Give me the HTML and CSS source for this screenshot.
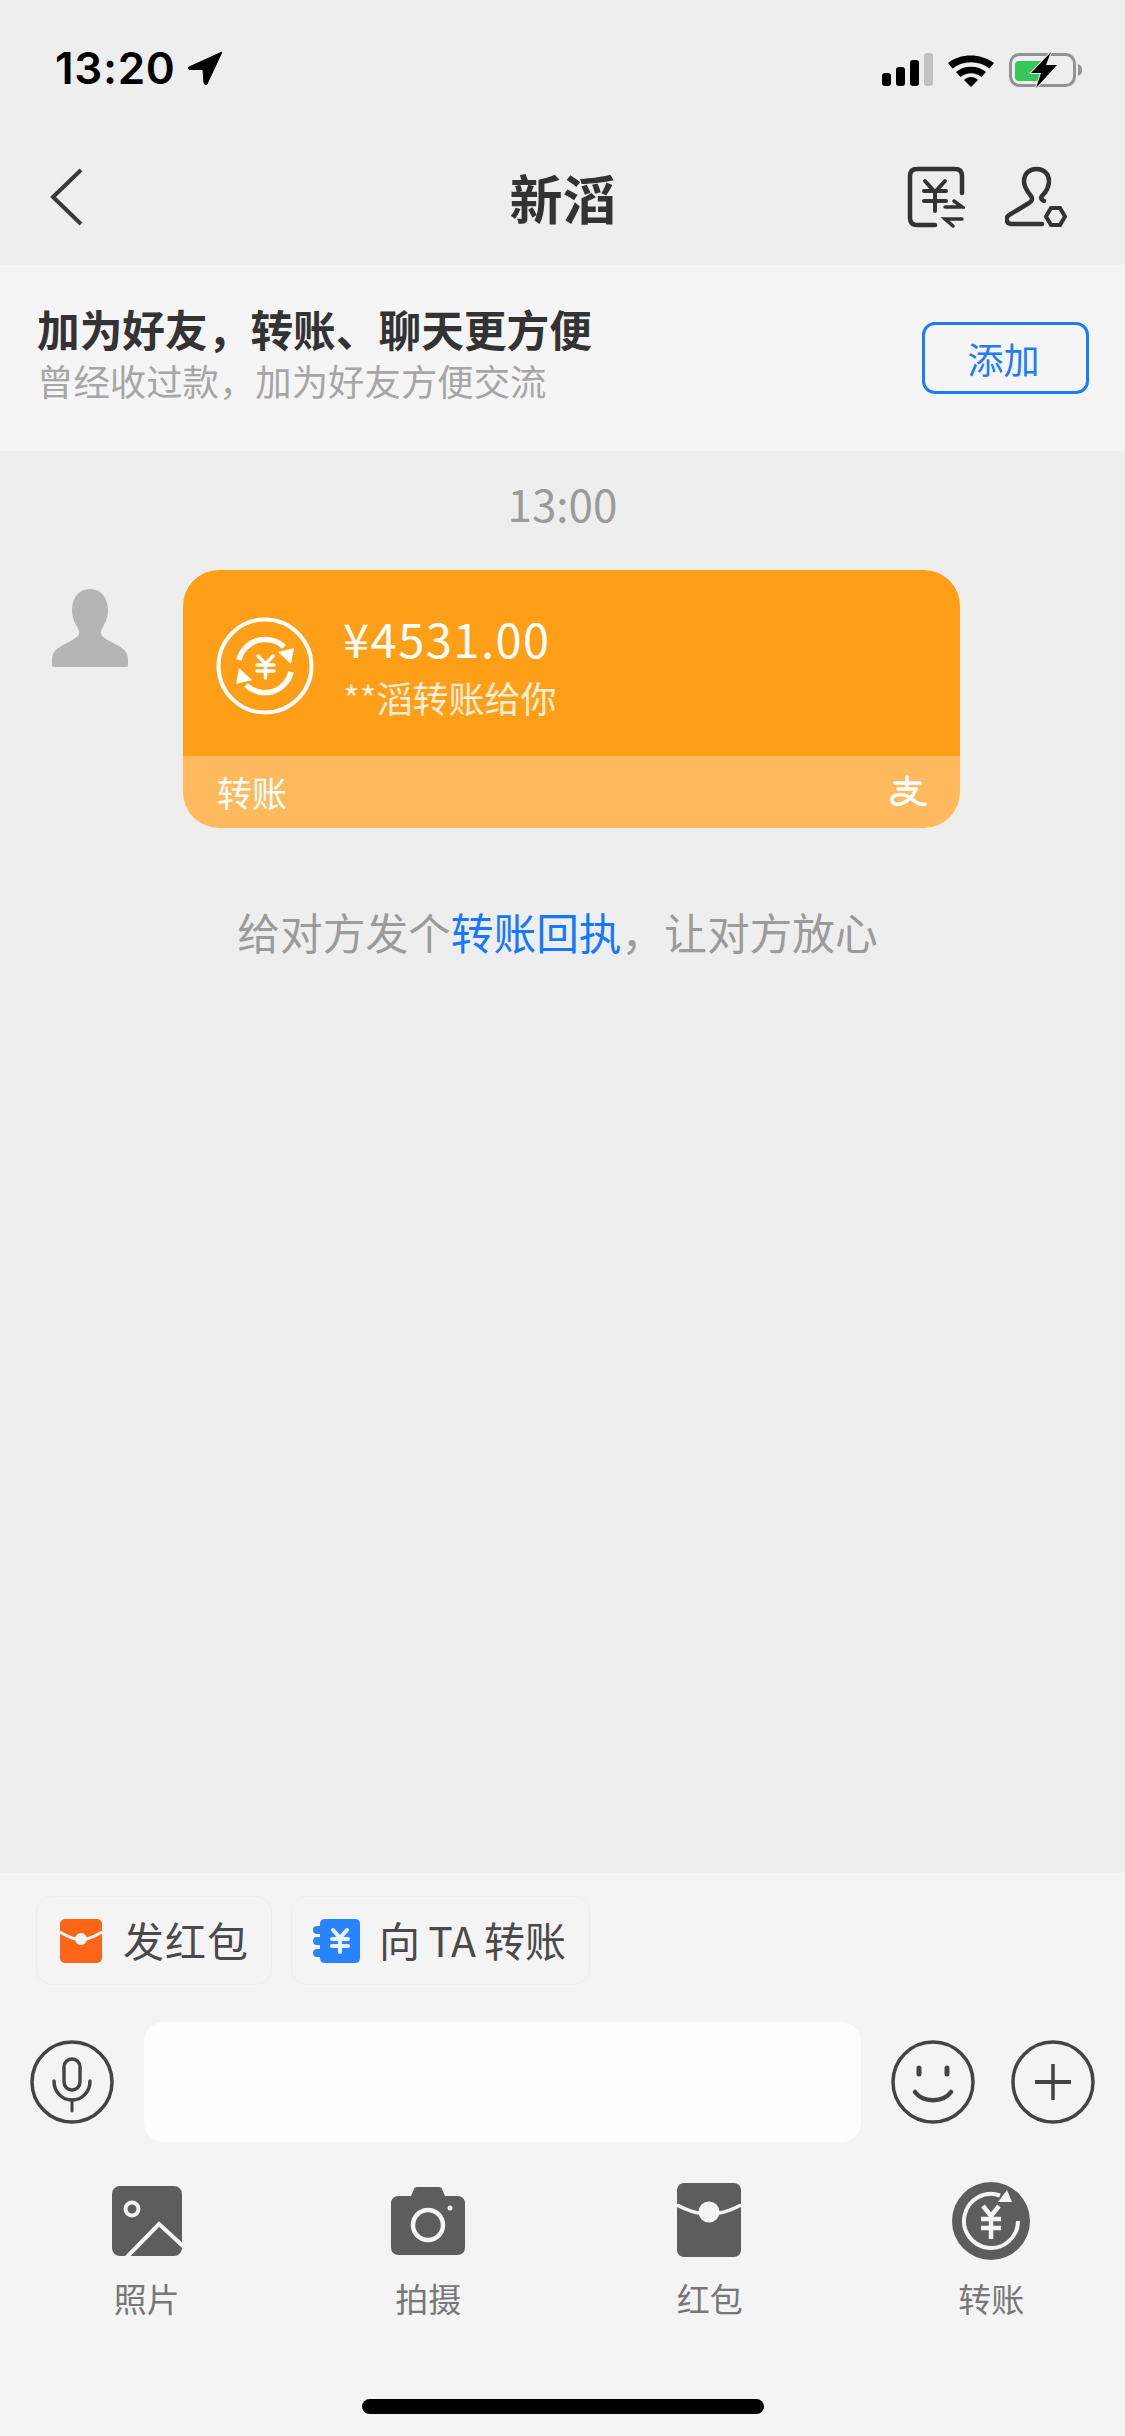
FILE: index.html
```html
<!DOCTYPE html>
<html lang="zh-CN">
<head>
<meta charset="utf-8">
<title>新滔</title>
<link rel="stylesheet" href="styles.css">
</head>
<body>
<div class="app">
  <header class="status">
    <div class="status-left">
      <span class="clock">13:20</span>
      <svg class="loc" width="36" height="35" viewBox="0 0 36 35"><path d="M35 1 L2 16 Q0 18 3 18.500 L16 18.500 L17 32 Q18 35 20 33 Z" fill="#000" stroke="#000" stroke-width="1" stroke-linejoin="round"/></svg>
    </div>
    <svg class="status-right" width="202" height="36" viewBox="0 0 202 36">
      <rect x="1" y="21" width="9" height="13" rx="3" fill="#000"/>
      <rect x="15" y="15" width="9" height="19" rx="3" fill="#000"/>
      <rect x="29" y="8" width="9" height="26" rx="3" fill="#000"/>
      <rect x="43" y="1" width="9" height="33" rx="3" fill="#c1c1c1"/>
      <path d="M67 11 C79 1 100 1 113 11 L108.500 16.500 C98 8 82 8 71.500 16.500 Z" fill="#000"/>
      <path d="M75 20 C83 13 97 13 105 20 L100.500 25 C94 20 86 20 79.500 25 Z" fill="#000"/>
      <path d="M83 28 C87 24 93 24 97 28 L90 35 Z" fill="#000"/>
      <rect x="129.500" y="2.500" width="64" height="31" rx="9" fill="none" stroke="#939393" stroke-width="3"/>
      <path d="M197 12 C200 13 201 15 201 18 C201 21 200 23 197 24 Z" fill="#939393"/>
      <path d="M138 9 Q134 9 134 13 V25 Q134 29 138 29 H161 V9 Z" fill="#34c759"/>
      <path d="M170 0 L150 21 H160 L155 36 L176 13 H165 Z" fill="#000" stroke="#eee" stroke-width="2" paint-order="stroke"/>
    </svg>
  </header>

  <nav class="nav">
    <svg class="back" width="36" height="58" viewBox="0 0 36 58"><path d="M32 2 L4 29 L32 56" fill="none" stroke="#3a3a3a" stroke-width="4"/></svg>
    <h1 class="title">新滔</h1>
    <div class="nav-actions">
      <svg width="58" height="62" viewBox="0 0 58 62" fill="none" stroke="#333" stroke-width="4.500" stroke-linecap="round">
        <path d="M28 59 H10 Q3 59 3 52 V10 Q3 3 10 3 H48 Q55 3 55 10 V27"/>
        <path d="M18 15 L28 26 L38 15 M17 25 H39 M17 35 H39 M28 26 V45" stroke-width="4"/>
        <path d="M38 41 H55 L47 35 M55 53 H38 L46 60" stroke-width="3.500"/>
      </svg>
      <svg width="62" height="62" viewBox="0 0 62 62" fill="none" stroke="#333" stroke-width="4.500" stroke-linecap="round">
        <path d="M37 58 H7 C1 58 0 52 4 49 L24 37 C27 35 28 33 26 30 C21 24 19 20 19 15 C19 8 24 3 31.500 3 C39 3 44 8 44 15 C44 21 41 26 37 30 C35 32 37 34 39 35"/>
        <path d="M46 42 H55 L60 50.500 L55 59 H46 L41 50.500 Z" stroke-width="4"/>
      </svg>
    </div>
  </nav>

  <section class="banner">
    <div class="banner-text">
      <div class="banner-title">加为好友，转账、聊天更方便</div>
      <div class="banner-sub">曾经收过款，加为好友方便交流</div>
    </div>
    <button class="add-btn">添加</button>
  </section>

  <main class="chat">
    <div class="time">13:00</div>
    <div class="msg">
      <svg class="avatar" width="78" height="80" viewBox="0 0 78 80"><path d="M39 1 C50 1 57 10 57 22 C57 32 52 38 50 43 C49 48 53 50 62 55 C72 60 77 63 77 72 V78 Q77 79 75 79 H3 Q1 79 1 78 V72 C1 63 6 60 16 55 C25 50 29 48 28 43 C26 38 21 32 21 22 C21 10 28 1 39 1 Z" fill="#b5b5b5"/></svg>
      <article class="card">
        <div class="card-main">
          <svg class="coin" width="98" height="98" viewBox="0 0 98 98" fill="none" stroke="#fff">
            <circle cx="49" cy="49" r="46.500" stroke-width="4"/>
            <path d="M23 43 A27 27 0 0 1 68 30" stroke-width="5.500"/>
            <path d="M75 55 A27 27 0 0 1 30 68" stroke-width="5.500"/>
            <path d="M62 35 L78 31 L75 47 Z" fill="#fff" stroke="none"/>
            <path d="M36 63 L20 67 L23 51 Z" fill="#fff" stroke="none"/>
            <path d="M42 39 L49.500 47 L57 39 M41 48 H58 M41 54 H58 M49.500 47 V61" stroke-width="3.500" stroke-linecap="round"/>
          </svg>
          <div class="card-text">
            <div class="amount">¥4531.00</div>
            <div class="from">**滔转账给你</div>
          </div>
        </div>
        <div class="card-foot">
          <span class="foot-label">转账</span>
          <svg width="38" height="34" viewBox="0 0 38 34" fill="none" stroke="#fff" stroke-width="3.500" stroke-linecap="round">
            <path d="M6 8 H31 M18 2 V13 M9 14 H27"/>
            <path d="M27 14 C22 27 7 33 3.500 27 C0 20 12 17 20 22 C27 27 31 31 36 29" stroke-width="3.500"/>
          </svg>
        </div>
      </article>
    </div>
    <p class="hint">给对方发个<span class="link">转账回执</span>，让对方放心</p>
  </main>

  <footer class="panel">
    <div class="chips">
      <div class="chip chip-red">
        <svg width="42" height="44" viewBox="0 0 42 44">
          <rect width="42" height="44" rx="5" fill="#ff6517"/>
          <path d="M0 13 Q10 19 16 20 A6 6 0 0 0 26 20 Q32 19 42 13" fill="none" stroke="#f4f4f4" stroke-width="3"/>
          <circle cx="21" cy="20" r="6" fill="#f4f4f4"/>
        </svg>
        <span>发红包</span>
      </div>
      <div class="chip chip-blue">
        <svg width="48" height="44" viewBox="0 0 48 44">
          <path d="M8 5 Q8 0 13 0 H43 Q48 0 48 5 V39 Q48 44 43 44 H13 Q8 44 8 39 Z" fill="#2b84ff"/>
          <rect x="1" y="7" width="11" height="8" rx="4" fill="#2b84ff"/>
          <rect x="1" y="18" width="11" height="8" rx="4" fill="#2b84ff"/>
          <rect x="1" y="30" width="11" height="8" rx="4" fill="#2b84ff"/>
          <path d="M21 11 L28 19 L35 11 M20 20 H36 M20 27 H36 M28 19 V33" fill="none" stroke="#eaf2ff" stroke-width="4" stroke-linecap="round"/>
        </svg>
        <span>向 TA 转账</span>
      </div>
    </div>

    <div class="composer">
      <svg width="84" height="84" viewBox="0 0 84 84" fill="none" stroke="#444" stroke-linecap="round">
        <circle cx="42" cy="42" r="40" stroke-width="3.500"/>
        <rect x="34" y="19" width="16" height="31" rx="8" stroke-width="3.500"/>
        <path d="M24 41 C24 52 32 60 42 60 C52 60 60 52 60 41" stroke-width="3.500"/>
        <path d="M42 60 V71" stroke-width="3"/>
      </svg>
      <div class="input"></div>
      <svg width="84" height="84" viewBox="0 0 84 84" fill="none" stroke="#444" stroke-linecap="round">
        <circle cx="42" cy="42" r="40" stroke-width="3.500"/>
        <path d="M28 28 V34 M56 28 V34" stroke-width="5"/>
        <path d="M24 52 C32 63 52 63 60 52" stroke-width="4.500"/>
      </svg>
      <svg width="84" height="84" viewBox="0 0 84 84" fill="none" stroke="#444">
        <circle cx="42" cy="42" r="40" stroke-width="3.500"/>
        <path d="M24 42 H60" stroke-width="4"/>
        <path d="M42 24 V60" stroke-width="3.500"/>
      </svg>
    </div>

    <div class="tools">
      <div class="tool">
        <svg width="72" height="72" viewBox="0 0 72 72">
          <rect x="1" y="1" width="70" height="70" rx="8" fill="#5d5d5d"/>
          <circle cx="21" cy="24" r="6.500" fill="#5d5d5d" stroke="#f4f4f4" stroke-width="4"/>
          <path d="M15 73 L48 39 L73 62" fill="none" stroke="#f4f4f4" stroke-width="4"/>
        </svg>
        <span>照片</span>
      </div>
      <div class="tool">
        <svg width="74" height="68" viewBox="0 0 74 68">
          <path d="M20 9 L23 2 Q23.500 0 26 0 H48 Q50.500 0 51 2 L54 9 H66 Q74 9 74 17 V60 Q74 68 66 68 H8 Q0 68 0 60 V17 Q0 9 8 9 Z" fill="#5d5d5d"/>
          <circle cx="37" cy="38" r="15" fill="none" stroke="#f4f4f4" stroke-width="4.500"/>
          <circle cx="59" cy="21" r="2.500" fill="#f4f4f4"/>
        </svg>
        <span>拍摄</span>
      </div>
      <div class="tool">
        <svg width="64" height="74" viewBox="0 0 64 74">
          <rect width="64" height="74" rx="7" fill="#5d5d5d"/>
          <path d="M0 22 Q14 29 22 30 M42 30 Q50 29 64 22" fill="none" stroke="#f4f4f4" stroke-width="3.500"/>
          <circle cx="32" cy="29" r="10.500" fill="#f4f4f4"/>
        </svg>
        <span>红包</span>
      </div>
      <div class="tool">
        <svg width="78" height="78" viewBox="0 0 78 78">
          <circle cx="39" cy="39" r="39" fill="#5d5d5d"/>
          <path d="M66 39 A27 27 0 1 1 48 13.500" fill="none" stroke="#f4f4f4" stroke-width="4"/>
          <path d="M55 8 L60 20 L46 20 Z" fill="#f4f4f4"/>
          <path d="M31 24 L39 34 L47 24 M29 37 H49 M29 46 H49 M39 34 V57" fill="none" stroke="#f4f4f4" stroke-width="4.500"/>
        </svg>
        <span>转账</span>
      </div>
    </div>

    <div class="home-bar"></div>
  </footer>
</div>
</body>
</html>
```

FILE: styles.css
```css
* { box-sizing: border-box; }
html, body { margin: 0; padding: 0; }
body {
  width: 1125px;
  height: 2436px;
  overflow: hidden;
  background: #eeeeee;
  font-family: "Noto Sans CJK SC", "Noto Sans", sans-serif;
}
svg { display: block; flex: none; }

.app { width: 1125px; height: 2436px; display: flex; flex-direction: column; }

.status {
  height: 88px;
  padding: 50px 42px 0 55px;
  display: flex;
  justify-content: space-between;
  align-items: flex-start;
  flex: none;
}
.status-left { display: flex; align-items: center; gap: 11px; height: 36px; }
.clock {
  font-family: Inter, "Liberation Sans", sans-serif;
  font-weight: 600;
  font-size: 44px;
  line-height: 36px;
  letter-spacing: 0.7px;
  color: #000;
}
.status-right { margin-top: 2px; }

.nav {
  height: 177px;
  flex: none;
  padding: 40px 58px 0 49px;
  position: relative;
  display: flex;
  align-items: center;
  justify-content: space-between;
}
.title {
  position: absolute;
  left: 0;
  right: 0;
  top: 71px;
  margin: 0;
  text-align: center;
  font-size: 53px;
  line-height: 76px;
  font-weight: 700;
  color: #333;
}
.nav-actions { display: flex; gap: 40px; }

.banner {
  height: 186px;
  flex: none;
  background: #f5f5f5;
  padding: 0 36px 12px 37px;
  display: flex;
  align-items: center;
  justify-content: space-between;
}
.banner-title { font-size: 42.700px; line-height: 54px; font-weight: 700; color: #333; }
.banner-sub { font-size: 36.400px; line-height: 48px; color: #a6a6a6; margin-top: 1px; }
.add-btn {
  width: 167px;
  height: 72px;
  margin-top: 12px;
  border: 3px solid #1e7cf8;
  border-radius: 13px;
  background: transparent;
  color: #1e7cf8;
  font-family: inherit;
  font-size: 36px;
  padding: 0 4px 0 0;
}

.chat { flex: 1; min-height: 0; }
.time {
  text-align: center;
  margin-top: 27px;
  font-size: 44px;
  line-height: 50px;
  color: #9b9b9b;
}
.msg { display: flex; align-items: flex-start; margin-top: 42px; padding-left: 51px; gap: 54px; }
.avatar { margin-top: 18px; }
.card { width: 777px; height: 258px; border-radius: 36px; overflow: hidden; display: flex; flex-direction: column; }
.card-main {
  height: 186px;
  background: #ff9f18;
  display: flex;
  align-items: flex-start;
  padding: 47px 0 0 33px;
  gap: 29px;
}
.card-text { color: #fff; }
.amount {
  font-size: 47px;
  line-height: 54px;
  letter-spacing: 1.500px;
  margin-top: -6px;
}
.from { font-size: 36px; line-height: 46px; margin-top: 9px; color: #ffeeda; }
.card-foot {
  height: 72px;
  background: #ffba5e;
  display: flex;
  align-items: center;
  justify-content: space-between;
  padding: 0 33px 0 34px;
  color: #fff;
}
.foot-label { font-size: 35px; line-height: 46px; }

.hint {
  margin: 75px 0 0;
  padding-right: 10px;
  text-align: center;
  font-size: 42.700px;
  line-height: 56px;
  color: #9b9b9b;
}
.link { color: #1677ff; }

.panel { height: 563px; flex: none; background: #f4f4f4; padding-top: 23px; display: flex; flex-direction: column; }
.chips { display: flex; gap: 19px; padding-left: 36px; }
.chip {
  height: 89px;
  border: 1px solid #eeeeee;
  border-radius: 16px;
  display: flex;
  align-items: center;
  font-size: 41px;
  color: #4a4a4a;
  white-space: nowrap;
}
.chip span { margin-bottom: 3px; }
.chip-red { width: 236px; padding-left: 23px; gap: 21px; letter-spacing: 1px; }
.chip-blue { width: 299px; padding-left: 20px; gap: 19px; }
.chip-blue span { word-spacing: -1px; }

.composer { display: flex; align-items: center; margin-top: 37px; padding-left: 30px; height: 120px; }
.input { width: 717px; height: 120px; margin: 0 30px; background: #fdfdfd; border-radius: 20px; }
.composer svg:last-child { margin-left: 36px; }

.tools { display: grid; grid-template-columns: repeat(4, 281.500px); padding-left: 6px; margin-top: 39px; }
.tool { display: flex; flex-direction: column; align-items: center; font-size: 33px; line-height: 42px; color: #777; }
.tool:nth-child(1) svg { margin-top: 4px; margin-bottom: 20px; }
.tool:nth-child(2) svg { margin-top: 6px; margin-bottom: 22px; }
.tool:nth-child(3) svg { margin-top: 2px; margin-bottom: 20px; margin-right: 2px; }
.tool:nth-child(4) svg { margin-top: 1px; margin-bottom: 17px; }

.home-bar { width: 402px; height: 15px; border-radius: 8px; background: #000; margin: 80px auto 0; }
```
